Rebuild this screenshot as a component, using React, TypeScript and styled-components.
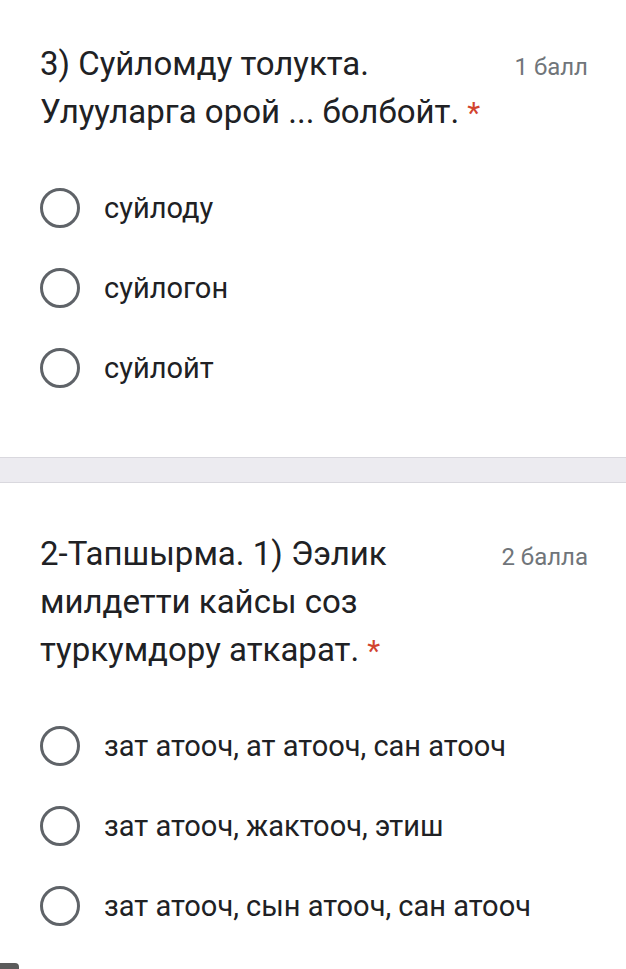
import styled, { createGlobalStyle } from "styled-components";

const GlobalStyle = createGlobalStyle`
  html, body {
    margin: 0;
    padding: 0;
    background: #ffffff;
  }
  body {
    font-family: Roboto, "Noto Sans", "Liberation Sans", sans-serif;
    color: #202124;
  }
`;

const Page = styled.div`
  position: relative;
  height: 969px;
  overflow: hidden;
  background: #ecebf0;
`;

const List = styled.div`
  display: flex;
  flex-direction: column;
  gap: 24px;
  margin-top: -8px;
`;

const Card = styled.section`
  background: #ffffff;
  border-top: 1px solid #d9d8de;
  border-bottom: 1px solid #d9d8de;
  padding: 47px 38px 49px 40px;
`;

const Header = styled.div`
  display: flex;
  align-items: baseline;
  gap: 16px;
`;

const Title = styled.div`
  flex: 1;
  font-size: 33px;
  line-height: 48px;
  color: #202124;
  max-width: 452px;
`;

const Required = styled.span`
  color: #d2442f;
  font-size: 30px;
`;

const Points = styled.div`
  margin-left: auto;
  font-size: 24px;
  color: #70757a;
  white-space: nowrap;
`;

const Options = styled.div`
  display: flex;
  flex-direction: column;
  margin-top: 31px;
`;

const Option = styled.label`
  display: flex;
  align-items: center;
  gap: 24px;
  height: 80px;
  font-size: 29px;
  color: #202124;
`;

const Radio = styled.span`
  box-sizing: border-box;
  width: 40px;
  height: 40px;
  border-radius: 50%;
  border: 3.5px solid #5f6368;
  flex-shrink: 0;
`;

const CornerButton = styled.div`
  position: absolute;
  left: 0;
  bottom: 0;
  width: 19px;
  height: 6px;
  background: #5b5b5b;
  border-top-right-radius: 4px;
`;

type Question = {
  title: string;
  points: string;
  options: string[];
};

const questions: Question[] = [
  {
    title: "3) Суйломду толукта. Улууларга орой ... болбойт.",
    points: "1 балл",
    options: ["суйлоду", "суйлогон", "суйлойт"],
  },
  {
    title: "2-Тапшырма. 1) Ээлик милдетти кайсы соз туркумдору аткарат.",
    points: "2 балла",
    options: [
      "зат атооч, ат атооч, сан атооч",
      "зат атооч, жактооч, этиш",
      "зат атооч, сын атооч, сан атооч",
    ],
  },
];

export default function App() {
  return (
    <>
      <GlobalStyle />
      <Page>
        <List>
          {questions.map((q) => (
            <Card key={q.title}>
              <Header>
                <Title>
                  {q.title} <Required>*</Required>
                </Title>
                <Points>{q.points}</Points>
              </Header>
              <Options>
                {q.options.map((o) => (
                  <Option key={o}>
                    <Radio />
                    {o}
                  </Option>
                ))}
              </Options>
            </Card>
          ))}
        </List>
        <CornerButton />
      </Page>
    </>
  );
}
